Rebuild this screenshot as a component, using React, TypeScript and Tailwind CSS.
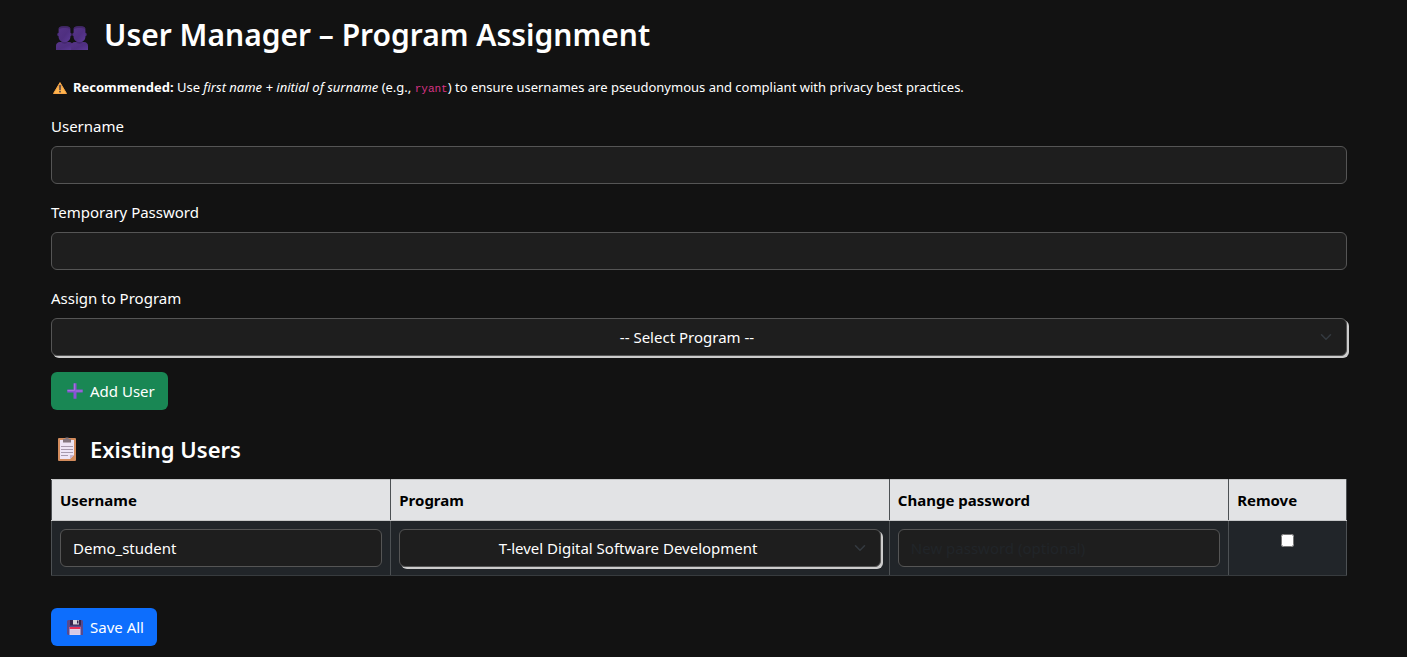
import type { ReactNode } from 'react';

const programs = ['T-level Digital Software Development'];

const users = [{ username: 'Demo_student', program: programs[0] }];

const columns = [
  { name: 'Username', width: 'w-[26.2%]' },
  { name: 'Program', width: 'w-[38.5%]' },
  { name: 'Change password', width: 'w-[26.2%]' },
  { name: 'Remove', width: 'w-[9.1%]' },
];

const control =
  'block h-[38px] w-full rounded-md border border-[#555] bg-[#1e1e1e] px-3 text-[15px] text-white placeholder:text-[#212529]';

const cell = 'border border-x-[#4d5154] border-t-[#c6c7c8] border-b-[#373b3e] bg-[#212529] p-2';

function PeopleIcon() {
  return (
    <svg viewBox="0 0 32 24" className="h-6 w-8" aria-hidden="true">
      <defs>
        <linearGradient id="skin" x1="0" x2="1" y1="0" y2="1">
          <stop offset="0" stopColor="#563487" />
          <stop offset="0.55" stopColor="#4f2f80" />
          <stop offset="1" stopColor="#5c3a96" />
        </linearGradient>
      </defs>
      {[0, 15].map((x) => (
        <g key={x} transform={`translate(${x} 0)`}>
          <path d="M0 24v-4C0 17.500 1.500 16.200 4 16h9c2.500.2 4 1.500 4 4v4z" fill="url(#skin)" />
          <path d="M5.500 13h6v3.500c0 1.500-6 1.500-6 0z" fill="#44276f" />
          <ellipse cx="2.400" cy="8.500" rx="1.100" ry="1.700" fill="#4a2b78" />
          <ellipse cx="14.600" cy="8.500" rx="1.100" ry="1.700" fill="#4a2b78" />
          <path d="M2.600 4C2.600 1 4.500.5 8.500.5S14.400 1 14.400 4v7c0 3-2.700 5-5.900 5s-5.900-2-5.900-5z" fill="url(#skin)" />
          <path d="M2.600 3C2.800.8 4.500.3 8.500.3S14.200.8 14.400 3C12 1.500 5 1.500 2.600 3z" fill="#432869" />
        </g>
      ))}
    </svg>
  );
}

function WarningIcon() {
  return (
    <svg viewBox="0 0 14 12" className="h-3 w-[14px]" aria-hidden="true">
      <path d="M7 .6 13.500 11.500H.5z" fill="#ffb54e" stroke="#f9a545" strokeLinejoin="round" />
      <path d="M6.200 3.300h1.600L7.500 8h-1z" fill="#43394a" stroke="#43394a" strokeWidth=".4" />
      <circle cx="7" cy="9.700" r=".9" fill="#43394a" />
    </svg>
  );
}

function PlusIcon() {
  return (
    <svg viewBox="0 0 16 16" className="size-4" aria-hidden="true">
      <path d="M6.500.3h3v6.200h6.200v3H9.500v6.200h-3V9.500H.3v-3h6.200z" fill="#8b51d8" />
      <path d="M7.500.5v7h-7M8.500 8h7" fill="none" stroke="#a97fd8" strokeWidth=".8" />
    </svg>
  );
}

function ClipboardIcon() {
  return (
    <svg viewBox="0 0 18 24" className="h-6 w-[18px]" aria-hidden="true">
      <rect y="1" width="18" height="23" rx="1" fill="#d28b5c" />
      <path d="M2 3h14v15l-4 4H2z" fill="#eee5f5" />
      <path d="M16 18h-4v4z" fill="#c6b5d3" />
      <path d="M5 2h2.500V.5h3V2H13v3.500H5z" fill="#85777f" />
      <path d="M3 9.500h12M3 12.500h12M3 15.500h12M3 18.500h7" stroke="#a79aad" />
    </svg>
  );
}

function FloppyIcon() {
  return (
    <svg viewBox="0 0 16 16" className="size-4" aria-hidden="true">
      <path d="M1 1h14l1 1v14H1l-1-1V2z" fill="#5b4a8c" />
      <path d="M3 1h11v5.500H3z" fill="#35254f" />
      <path d="M6 1h6v4.500H6z" fill="#d9d4df" />
      <path d="M10 1.500h1.500V4.500H10z" fill="#35254f" />
      <path d="M2.500 8h11v8h-11z" fill="#ddd0e9" />
      <path d="M2.500 8h11v2h-11z" fill="#e72e57" />
      <path d="M3.500 12h9M3.500 14h9" stroke="#c9b8dc" strokeWidth=".6" />
    </svg>
  );
}

function ProgramSelect({ id, label, value = '' }: { id: string; label?: string; value?: string }) {
  return (
    <div className="relative">
      <select
        id={id}
        aria-label={label}
        defaultValue={value}
        className="block h-[38px] w-full appearance-none rounded-md border border-[#555] bg-[#1e1e1e] pr-9 pl-3 text-center text-[15px] text-white shadow-[2px_2px_0_#ccc]"
      >
        <option value="">-- Select Program --</option>
        {programs.map((program) => (
          <option key={program}>{program}</option>
        ))}
      </select>
      <svg
        viewBox="0 0 16 16"
        className="pointer-events-none absolute top-[13px] right-[15px] h-3 w-3"
        fill="none"
        stroke="#343a40"
        strokeWidth="2"
        strokeLinecap="round"
        strokeLinejoin="round"
        aria-hidden="true"
      >
        <path d="m2 5 6 6 6-6" />
      </svg>
    </div>
  );
}

function Field({ id, label, children }: { id: string; label: string; children: ReactNode }) {
  return (
    <div className="mb-4">
      <label htmlFor={id} className="mb-2 block leading-6">
        {label}
      </label>
      {children}
    </div>
  );
}

export default function App() {
  return (
    <div className="min-h-screen bg-[#121212] pt-[17px] pr-[60px] pb-[11px] pl-[51px] font-['Segoe_UI','Noto_Sans',sans-serif] text-[15px] text-white">
      <h1 className="mb-6 flex items-center gap-4 pl-[5px] text-[30px] leading-9 font-semibold">
        <span className="pt-[6px]">
          <PeopleIcon />
        </span>
        User Manager – Program Assignment
      </h1>

      <p className="mb-[15px] flex items-center gap-[6px] pl-[2px] text-[13px] leading-5">
        <WarningIcon />
        <span>
          <strong className="font-bold">Recommended:</strong> Use <em>first name + initial of surname</em> (e.g.,{' '}
          <code className="font-['Liberation_Mono',monospace] text-[11px] text-[#d63384]">ryant</code>) to ensure usernames
          are pseudonymous and compliant with privacy best practices.
        </span>
      </p>

      <form onSubmit={(e) => e.preventDefault()}>
        <Field id="username" label="Username">
          <input id="username" type="text" className={control} />
        </Field>
        <Field id="password" label="Temporary Password">
          <input id="password" type="password" className={control} />
        </Field>
        <Field id="program" label="Assign to Program">
          <ProgramSelect id="program" />
        </Field>
        <button type="submit" className="flex h-[38px] items-center gap-[7px] rounded-md bg-[#198754] pr-[13px] pl-4">
          <PlusIcon />
          Add User
        </button>
      </form>

      <h2 className="mt-[23px] mb-[14px] flex items-center gap-[14px] pl-[7px] text-[22px] leading-8 font-semibold">
        <ClipboardIcon />
        Existing Users
      </h2>

      <form onSubmit={(e) => e.preventDefault()}>
        <table className="mb-8 w-full table-fixed border-collapse">
          <thead>
            <tr>
              {columns.map((column) => (
                <th
                  key={column.name}
                  className={`${column.width} border border-x-[#4d5154] border-y-[#c6c7c8] bg-[#e2e3e5] p-2 text-left leading-6 font-bold text-black`}
                >
                  {column.name}
                </th>
              ))}
            </tr>
          </thead>
          <tbody>
            {users.map((user) => (
              <tr key={user.username} className="align-top">
                <td className={cell}>
                  <input type="text" aria-label="Username" defaultValue={user.username} className={control} />
                </td>
                <td className={cell}>
                  <ProgramSelect id={`program-${user.username}`} label="Program" value={user.program} />
                </td>
                <td className={cell}>
                  <input
                    type="password"
                    aria-label="Change password"
                    placeholder="New password (optional)"
                    className={control}
                  />
                </td>
                <td className={cell}>
                  <input type="checkbox" aria-label={`Remove ${user.username}`} className="mx-auto mt-[5px] block size-[13px]" />
                </td>
              </tr>
            ))}
          </tbody>
        </table>
        <button type="submit" className="flex h-[38px] items-center gap-[7px] rounded-md bg-[#0d6efd] pr-[13px] pl-4">
          <FloppyIcon />
          Save All
        </button>
      </form>
    </div>
  );
}
